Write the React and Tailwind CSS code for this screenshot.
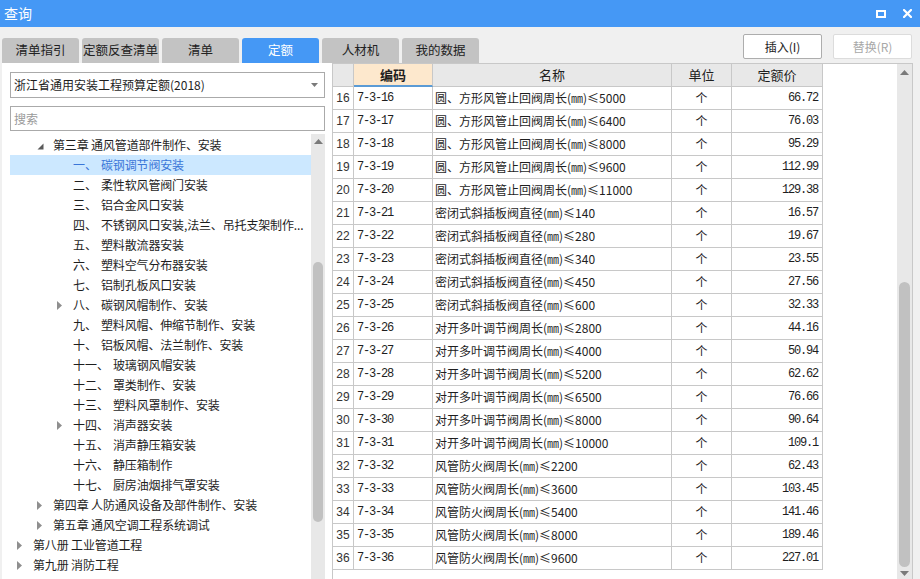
import React from "react";

const tabs = ["清单指引", "定额反查清单", "清单", "定额", "人材机", "我的数据"];

const tree = [
  { lvl: 2, arrow: "open", text: "第三章 通风管道部件制作、安装" },
  { lvl: 3, num: "一、", text: "碳钢调节阀安装", selected: true },
  { lvl: 3, num: "二、", text: "柔性软风管阀门安装" },
  { lvl: 3, num: "三、", text: "铝合金风口安装" },
  { lvl: 3, num: "四、", text: "不锈钢风口安装,法兰、吊托支架制作..." },
  { lvl: 3, num: "五、", text: "塑料散流器安装" },
  { lvl: 3, num: "六、", text: "塑料空气分布器安装" },
  { lvl: 3, num: "七、", text: "铝制孔板风口安装" },
  { lvl: 3, num: "八、", text: "碳钢风帽制作、安装", arrow: "closed" },
  { lvl: 3, num: "九、", text: "塑料风帽、伸缩节制作、安装" },
  { lvl: 3, num: "十、", text: "铝板风帽、法兰制作、安装" },
  { lvl: 3, num: "十一、", text: "玻璃钢风帽安装" },
  { lvl: 3, num: "十二、", text: "罩类制作、安装" },
  { lvl: 3, num: "十三、", text: "塑料风罩制作、安装" },
  { lvl: 3, num: "十四、", text: "消声器安装", arrow: "closed" },
  { lvl: 3, num: "十五、", text: "消声静压箱安装" },
  { lvl: 3, num: "十六、", text: "静压箱制作" },
  { lvl: 3, num: "十七、", text: "厨房油烟排气罩安装" },
  { lvl: 2, arrow: "closed", text: "第四章 人防通风设备及部件制作、安装" },
  { lvl: 2, arrow: "closed", text: "第五章 通风空调工程系统调试" },
  { lvl: 1, arrow: "closed", text: "第八册 工业管道工程" },
  { lvl: 1, arrow: "closed", text: "第九册 消防工程" },
];

const rows = [
  [16, "圆、方形风管止回阀周长(㎜)≤5000", "66.72"],
  [17, "圆、方形风管止回阀周长(㎜)≤6400", "76.03"],
  [18, "圆、方形风管止回阀周长(㎜)≤8000", "95.29"],
  [19, "圆、方形风管止回阀周长(㎜)≤9600", "112.99"],
  [20, "圆、方形风管止回阀周长(㎜)≤11000", "129.38"],
  [21, "密闭式斜插板阀直径(㎜)≤140", "16.57"],
  [22, "密闭式斜插板阀直径(㎜)≤280", "19.67"],
  [23, "密闭式斜插板阀直径(㎜)≤340", "23.55"],
  [24, "密闭式斜插板阀直径(㎜)≤450", "27.56"],
  [25, "密闭式斜插板阀直径(㎜)≤600", "32.33"],
  [26, "对开多叶调节阀周长(㎜)≤2800", "44.16"],
  [27, "对开多叶调节阀周长(㎜)≤4000", "50.94"],
  [28, "对开多叶调节阀周长(㎜)≤5200", "62.62"],
  [29, "对开多叶调节阀周长(㎜)≤6500", "76.66"],
  [30, "对开多叶调节阀周长(㎜)≤8000", "90.64"],
  [31, "对开多叶调节阀周长(㎜)≤10000", "109.1"],
  [32, "风管防火阀周长(㎜)≤2200", "62.43"],
  [33, "风管防火阀周长(㎜)≤3600", "103.45"],
  [34, "风管防火阀周长(㎜)≤5400", "141.46"],
  [35, "风管防火阀周长(㎜)≤8000", "189.46"],
  [36, "风管防火阀周长(㎜)≤9600", "227.01"],
];

const mono = "font-['Liberation_Mono',monospace] text-[12px] tracking-[-1.2px]";

const Arrow = ({ kind }) => {
  if (kind === "open") {
    return (
      <svg width="7" height="7" viewBox="0 0 7 7" className="ml-[4px] mt-[3px]">
        <path d="M6.5 0.5 L6.5 6.5 L0.5 6.5 Z" fill="#5a5a5a" />
      </svg>
    );
  }
  if (kind === "closed") {
    return (
      <svg width="5" height="9" viewBox="0 0 5 9" className="ml-[4px]">
        <path d="M0 0 L5 4.5 L0 9 Z" fill="#8f8f8f" />
      </svg>
    );
  }
  return null;
};

const TreeRow = ({ item }) => {
  const indent = { 1: "pl-[3px]", 2: "pl-[23px]", 3: "pl-[43px]" }[item.lvl];
  return (
    <div
      className={`h-[20px] flex items-center whitespace-nowrap ${indent} ${
        item.selected ? "bg-[#cce8ff] text-[#3a76d8]" : "text-[#1e1e1e]"
      }`}
    >
      <div className="w-[20px] h-[20px] flex items-center shrink-0">
        <Arrow kind={item.arrow} />
      </div>
      {item.num && <span className="shrink-0 mr-[4px]">{item.num}</span>}
      <span className="tracking-[-0.15px]">{item.text}</span>
    </div>
  );
};

const ScrollUp = () => (
  <svg width="9" height="5" viewBox="0 0 9 5">
    <path d="M0 5 L4.5 0 L9 5 Z" fill="#7a7a7a" />
  </svg>
);

const ScrollDown = () => (
  <svg width="9" height="5" viewBox="0 0 9 5">
    <path d="M0 0 L4.5 5 L9 0 Z" fill="#7a7a7a" />
  </svg>
);

export default function App() {
  return (
    <div className="w-[920px] h-[579px] bg-[#f0f0f0] flex flex-col overflow-hidden font-['Noto_Sans_CJK_SC',sans-serif] text-[12px] text-[#1e1e1e]">
      {/* title bar */}
      <div className="h-[27px] bg-[#4598f5] flex items-center pl-[4px] pr-[8px] text-white text-[14px] shrink-0">
        <span>查询</span>
        <div className="ml-auto flex items-center gap-[17px]">
          <div className="w-[10px] h-[8px] border-2 border-white" />
          <svg width="9" height="9" viewBox="0 0 9 9">
            <path d="M1 1 L8 8 M8 1 L1 8" stroke="#fff" strokeWidth="2.2" strokeLinecap="square" />
          </svg>
        </div>
      </div>

      {/* tabs + buttons */}
      <div className="h-[36px] flex shrink-0">
        <div className="flex items-end gap-[3px] pl-[2px]">
          {tabs.map((t) => (
            <div
              key={t}
              className={`w-[77px] h-[25px] rounded-t-[3px] flex items-center justify-center text-[12.5px] ${
                t === "定额" ? "bg-[#4598f5] text-white" : "bg-[#c3c3c3] text-[#222]"
              }`}
            >
              {t}
            </div>
          ))}
        </div>
        <div className="ml-auto mt-[7px] mr-[8px] flex gap-[11px] self-start">
          <div className="w-[79px] h-[25px] bg-white border border-[#adadad] rounded-[2px] flex items-center justify-center text-[#222]">
            插入(I)
          </div>
          <div className="w-[79px] h-[25px] bg-white border border-[#dcdcdc] rounded-[2px] flex items-center justify-center text-[#a8a8a8]">
            替换(R)
          </div>
        </div>
      </div>

      {/* main */}
      <div className="flex flex-1 min-h-0 ml-[2px] mr-[7px]">
        {/* left panel */}
        <div className="w-[330px] bg-white flex flex-col">
          <div className="mt-[9px] ml-[8px] mr-[7px] h-[26px] border border-[#aaaaaa] flex items-center pl-[3px] pr-[6px]">
            <span>浙江省通用安装工程预算定额(2018)</span>
            <svg width="7" height="4" viewBox="0 0 7 4" className="ml-auto">
              <path d="M0 0 L3.5 4 L7 0 Z" fill="#7a7a7a" />
            </svg>
          </div>
          <div className="mt-[8px] ml-[8px] mr-[7px] h-[25px] border border-[#aaaaaa] flex items-center pl-[3px] text-[#9a9a9a]">
            搜索
          </div>
          <div className="mt-[3px] ml-[8px] mr-[7px] flex-1 min-h-0 flex">
            <div className="flex-1 min-w-0 pt-[1px] overflow-hidden">
              {tree.map((item, i) => (
                <TreeRow key={i} item={item} />
              ))}
            </div>
            <div className="w-[14px] bg-[#e8e8e8] flex flex-col items-center">
              <div className="h-[14px] flex items-center justify-center">
                <ScrollUp />
              </div>
              <div className="h-[114px]" />
              <div className="w-[10px] h-[260px] rounded-full bg-[#c1c1c1]" />
            </div>
          </div>
        </div>

        {/* right grid area */}
        <div className="flex-1 flex bg-white border-l border-t border-r border-[#c8c8c8]">
          <div className="flex-1">
            <div className="flex h-[23px] border-b border-[#c8c8c8] bg-[#e8e8e8] w-[490px]">
              <div className="w-[21px] border-r border-[#c8c8c8]" />
              <div className="w-[79px] border-r border-[#c8c8c8] bg-[#fde8cd] border-b-2 border-b-[#5b9bd5] -mb-px flex items-center justify-center font-bold text-[13px]">
                编码
              </div>
              <div className="w-[239px] border-r border-[#c8c8c8] flex items-center justify-center text-[13px]">
                名称
              </div>
              <div className="w-[60px] border-r border-[#c8c8c8] flex items-center justify-center text-[13px]">
                单位
              </div>
              <div className="w-[91px] border-r border-[#c8c8c8] flex items-center justify-center text-[13px]">
                定额价
              </div>
            </div>
            {rows.map(([n, name, price]) => (
              <div key={n} className="flex h-[23px] border-b border-[#c8c8c8] w-[490px]">
                <div className="w-[21px] border-r border-[#c8c8c8] flex items-center justify-center font-['Liberation_Sans',sans-serif] text-[12px] text-[#333]">
                  {n}
                </div>
                <div className={`w-[79px] border-r border-[#c8c8c8] flex items-center pl-[3px] ${mono}`}>
                  7-3-{n}
                </div>
                <div className="w-[239px] border-r border-[#c8c8c8] flex items-center pl-[2px] whitespace-nowrap overflow-hidden">
                  {name}
                </div>
                <div className="w-[60px] border-r border-[#c8c8c8] flex items-center justify-center">个</div>
                <div className={`w-[91px] border-r border-[#c8c8c8] flex items-center justify-end pr-[4px] ${mono}`}>
                  {price}
                </div>
              </div>
            ))}
          </div>
          <div className="w-[15px] bg-[#e8e8e8] flex flex-col items-center">
            <div className="h-[16px] flex items-center justify-center">
              <ScrollUp />
            </div>
            <div className="h-[202px]" />
            <div className="w-[11px] h-[285px] rounded-full bg-[#c1c1c1]" />
            <div className="flex-1 flex items-center justify-center">
              <ScrollDown />
            </div>
          </div>
        </div>
      </div>
    </div>
  );
}
